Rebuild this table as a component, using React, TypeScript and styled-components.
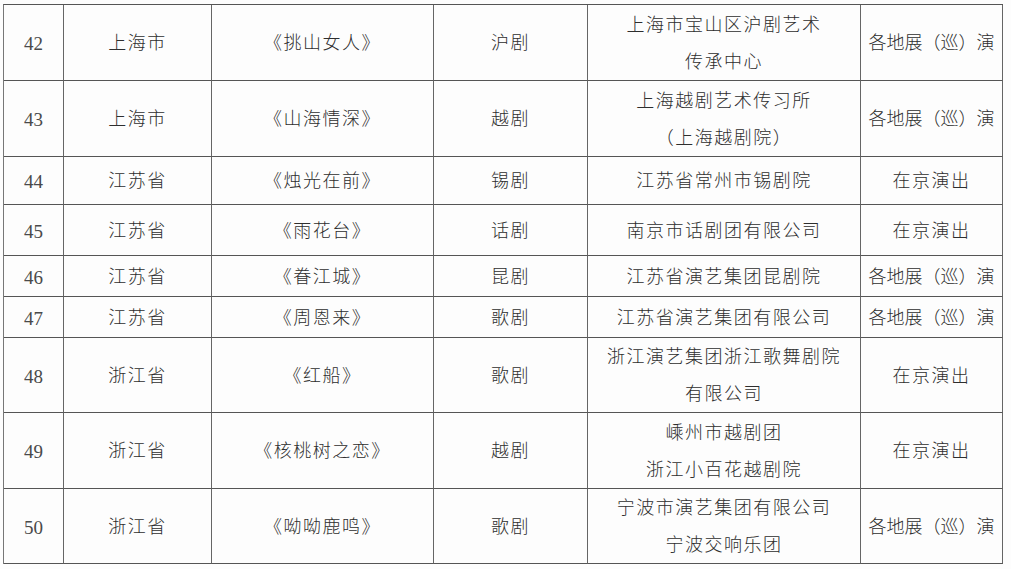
import {FunctionComponent, Fragment} from 'react'
import styled, {createGlobalStyle} from 'styled-components'

const GlobalStyle = createGlobalStyle`
  html, body {
    margin: 0;
    padding: 0;
    background: #ffffff;
  }
`

const Page = styled.div`
  width: 1011px;
  height: 569px;
  padding: 4px 0 0 3px;
  box-sizing: border-box;
  background: #fdfdfd;
  overflow: hidden;
`

const Table = styled.div`
  display: grid;
  grid-template-columns: 60px 148px 222px 154px 273px 142px;
  grid-template-rows: 76px 76px 48px 51px 41px 41px 75px 76px 75px;
  width: 999px;
  border-top: 1.5px solid #555;
  border-left: 1px solid #777;
  box-sizing: content-box;
`

const Cell = styled.div<{$num?: boolean; $tight?: boolean}>`
  display: flex;
  flex-direction: column;
  align-items: center;
  justify-content: center;
  padding-top: 2px;
  border-right: 1px solid #666;
  border-bottom: 1px solid #555;
  color: ${p => p.$num ? '#4a4a4a' : '#2e2e2e'};
  font-family: ${p => p.$num ? '"Liberation Serif", serif' : '"Liberation Serif", "Noto Sans CJK SC", serif'};
  font-size: ${p => p.$num ? '19px' : '18px'};
  font-weight: 200;
  letter-spacing: ${p => p.$num ? '0' : p.$tight ? '0' : '1.5px'};
  line-height: 37px;
  text-align: center;
  white-space: nowrap;
`

const Line = styled.span`
  display: block;
`

interface RowData {
    no: string
    region: string
    title: string
    genre: string
    org: string[]
    mode: string
}

const rows: RowData[] = [
    {no: '42', region: '上海市', title: '《挑山女人》', genre: '沪剧', org: ['上海市宝山区沪剧艺术', '传承中心'], mode: '各地展（巡）演'},
    {no: '43', region: '上海市', title: '《山海情深》', genre: '越剧', org: ['上海越剧艺术传习所', '（上海越剧院）'], mode: '各地展（巡）演'},
    {no: '44', region: '江苏省', title: '《烛光在前》', genre: '锡剧', org: ['江苏省常州市锡剧院'], mode: '在京演出'},
    {no: '45', region: '江苏省', title: '《雨花台》', genre: '话剧', org: ['南京市话剧团有限公司'], mode: '在京演出'},
    {no: '46', region: '江苏省', title: '《眷江城》', genre: '昆剧', org: ['江苏省演艺集团昆剧院'], mode: '各地展（巡）演'},
    {no: '47', region: '江苏省', title: '《周恩来》', genre: '歌剧', org: ['江苏省演艺集团有限公司'], mode: '各地展（巡）演'},
    {no: '48', region: '浙江省', title: '《红船》', genre: '歌剧', org: ['浙江演艺集团浙江歌舞剧院', '有限公司'], mode: '在京演出'},
    {no: '49', region: '浙江省', title: '《核桃树之恋》', genre: '越剧', org: ['嵊州市越剧团', '浙江小百花越剧院'], mode: '在京演出'},
    {no: '50', region: '浙江省', title: '《呦呦鹿鸣》', genre: '歌剧', org: ['宁波市演艺集团有限公司', '宁波交响乐团'], mode: '各地展（巡）演'},
]

const App: FunctionComponent = () => {
    return (
        <>
            <GlobalStyle/>
            <Page>
                <Table>
                    {rows.map(r => (
                        <Fragment key={r.no}>
                            <Cell $num>{r.no}</Cell>
                            <Cell>{r.region}</Cell>
                            <Cell>{r.title}</Cell>
                            <Cell>{r.genre}</Cell>
                            <Cell>
                                {r.org.map(l => <Line key={l}>{l}</Line>)}
                            </Cell>
                            <Cell $tight={r.mode.length > 4}>{r.mode}</Cell>
                        </Fragment>
                    ))}
                </Table>
            </Page>
        </>
    )
}

export default App
